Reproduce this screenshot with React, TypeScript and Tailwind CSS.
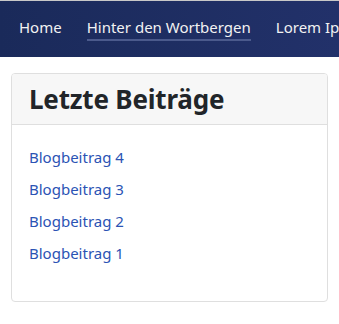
export default function App() {
  const posts = ['Blogbeitrag 4', 'Blogbeitrag 3', 'Blogbeitrag 2', 'Blogbeitrag 1']
  return (
    <div className="w-[339px] h-[324px] overflow-hidden bg-white font-['Noto_Sans',sans-serif]">
      {/* Navbar */}
      <nav className="h-[57px] border-t border-[#c8c8c8] bg-gradient-to-r from-[#1a2a5a] to-[#22316a] flex items-start gap-[25px] pl-[19px] pt-[15px] whitespace-nowrap overflow-hidden">
        <a className="text-[15px] text-[#f2f2f2] leading-[22px]">Home</a>
        <a className="text-[15px] text-[#f2f2f2] leading-[22px] border-b-2 border-[#4b5a8c] pb-[1px]">
          Hinter den Wortbergen
        </a>
        <a className="text-[15px] text-[#f2f2f2] leading-[22px]">Lorem Ipsum</a>
      </nav>

      {/* Card */}
      <div className="mx-[11px] mt-[16px] h-[229px] border border-[#dfdfdf] rounded-[4px] flex flex-col overflow-hidden">
        <div className="h-[51px] bg-[#f7f7f7] border-b border-[#dfdfdf] px-[17px] flex items-center">
          <h2 className="text-[26px] font-bold text-[#212529] leading-none tracking-[-0.2px]">Letzte Beiträge</h2>
        </div>
        <ul className="px-[17px] pt-[21px] flex flex-col gap-[10px]">
          {posts.map((p) => (
            <li key={p} className="leading-[22px] h-[22px]">
              <a className="text-[15px] leading-[22px] text-[#2b53b4]">{p}</a>
            </li>
          ))}
        </ul>
      </div>
    </div>
  )
}
